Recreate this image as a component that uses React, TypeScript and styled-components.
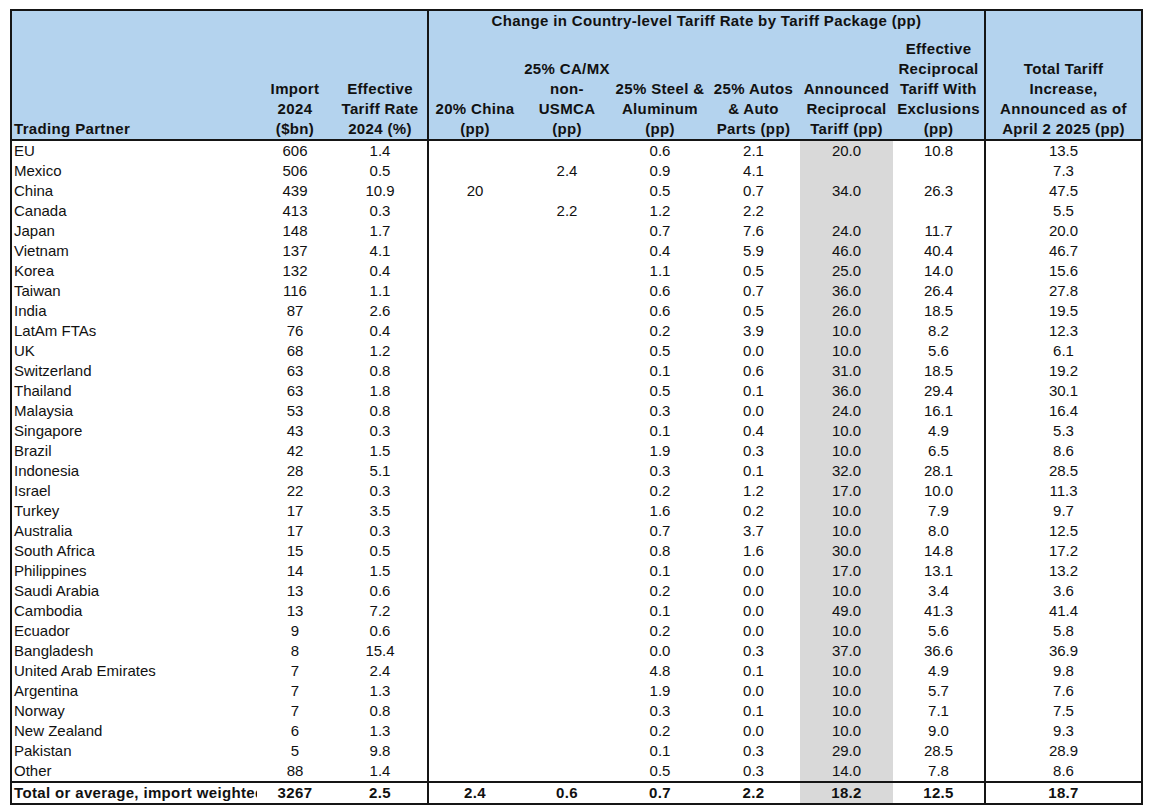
import React from "react";
import styled, { createGlobalStyle, css } from "styled-components";

const GlobalStyle = createGlobalStyle`
  html, body {
    margin: 0;
    padding: 0;
    background: #ffffff;
  }
`;

const Page = styled.div`
  padding: 9px 0 0 10px;
  background: #ffffff;
  min-height: 812px;
  box-sizing: border-box;
`;

const LINE = "#151515";
const HEAD_BG = "#B4D3EE";
const SHADE = "#D9D9D9";

const Table = styled.table`
  border-collapse: separate;
  border-spacing: 0;
  table-layout: fixed;
  width: 1133px;
  border: 2px solid ${LINE};
  font-family: "Liberation Sans", Arial, sans-serif;
  font-size: 15px;
  line-height: 20px;
  color: #111111;
`;

const HeadRow = styled.tr<{ $h: number }>`
  height: ${(p) => p.$h}px;
`;

const HeadCell = styled.th<{
  $left?: boolean;
  $divider?: boolean;
  $base?: boolean;
  $middle?: boolean;
}>`
  background: ${HEAD_BG};
  font-weight: bold;
  letter-spacing: 0.35px;
  padding: 0;
  text-align: ${(p) => (p.$left ? "left" : "center")};
  padding-left: ${(p) => (p.$left ? "2px" : "0")};
  vertical-align: ${(p) => (p.$middle ? "middle" : "bottom")};
  white-space: nowrap;
  ${(p) =>
    p.$divider &&
    css`
      border-right: 2px solid ${LINE};
    `}
  ${(p) =>
    p.$base &&
    css`
      border-bottom: 2px solid ${LINE};
    `}
`;

const BodyRow = styled.tr`
  height: 20px;
`;

const Cell = styled.td<{
  $left?: boolean;
  $divider?: boolean;
  $shade?: boolean;
  $total?: boolean;
}>`
  padding: 0;
  height: 20px;
  text-align: ${(p) => (p.$left ? "left" : "center")};
  padding-left: ${(p) => (p.$left ? "2px" : "0")};
  vertical-align: middle;
  white-space: nowrap;
  overflow: hidden;
  text-overflow: clip;
  background: ${(p) => (p.$shade ? SHADE : "#ffffff")};
  ${(p) =>
    p.$divider &&
    css`
      border-right: 2px solid ${LINE};
    `}
  ${(p) =>
    p.$total &&
    css`
      border-top: 2px solid ${LINE};
      font-weight: bold;
      letter-spacing: 0.35px;
      height: 18px;
    `}
`;

type Row = [string, string, string, string, string, string, string, string, string, string];

const rows: Row[] = [
  ["EU", "606", "1.4", "", "", "0.6", "2.1", "20.0", "10.8", "13.5"],
  ["Mexico", "506", "0.5", "", "2.4", "0.9", "4.1", "", "", "7.3"],
  ["China", "439", "10.9", "20", "", "0.5", "0.7", "34.0", "26.3", "47.5"],
  ["Canada", "413", "0.3", "", "2.2", "1.2", "2.2", "", "", "5.5"],
  ["Japan", "148", "1.7", "", "", "0.7", "7.6", "24.0", "11.7", "20.0"],
  ["Vietnam", "137", "4.1", "", "", "0.4", "5.9", "46.0", "40.4", "46.7"],
  ["Korea", "132", "0.4", "", "", "1.1", "0.5", "25.0", "14.0", "15.6"],
  ["Taiwan", "116", "1.1", "", "", "0.6", "0.7", "36.0", "26.4", "27.8"],
  ["India", "87", "2.6", "", "", "0.6", "0.5", "26.0", "18.5", "19.5"],
  ["LatAm FTAs", "76", "0.4", "", "", "0.2", "3.9", "10.0", "8.2", "12.3"],
  ["UK", "68", "1.2", "", "", "0.5", "0.0", "10.0", "5.6", "6.1"],
  ["Switzerland", "63", "0.8", "", "", "0.1", "0.6", "31.0", "18.5", "19.2"],
  ["Thailand", "63", "1.8", "", "", "0.5", "0.1", "36.0", "29.4", "30.1"],
  ["Malaysia", "53", "0.8", "", "", "0.3", "0.0", "24.0", "16.1", "16.4"],
  ["Singapore", "43", "0.3", "", "", "0.1", "0.4", "10.0", "4.9", "5.3"],
  ["Brazil", "42", "1.5", "", "", "1.9", "0.3", "10.0", "6.5", "8.6"],
  ["Indonesia", "28", "5.1", "", "", "0.3", "0.1", "32.0", "28.1", "28.5"],
  ["Israel", "22", "0.3", "", "", "0.2", "1.2", "17.0", "10.0", "11.3"],
  ["Turkey", "17", "3.5", "", "", "1.6", "0.2", "10.0", "7.9", "9.7"],
  ["Australia", "17", "0.3", "", "", "0.7", "3.7", "10.0", "8.0", "12.5"],
  ["South Africa", "15", "0.5", "", "", "0.8", "1.6", "30.0", "14.8", "17.2"],
  ["Philippines", "14", "1.5", "", "", "0.1", "0.0", "17.0", "13.1", "13.2"],
  ["Saudi Arabia", "13", "0.6", "", "", "0.2", "0.0", "10.0", "3.4", "3.6"],
  ["Cambodia", "13", "7.2", "", "", "0.1", "0.0", "49.0", "41.3", "41.4"],
  ["Ecuador", "9", "0.6", "", "", "0.2", "0.0", "10.0", "5.6", "5.8"],
  ["Bangladesh", "8", "15.4", "", "", "0.0", "0.3", "37.0", "36.6", "36.9"],
  ["United Arab Emirates", "7", "2.4", "", "", "4.8", "0.1", "10.0", "4.9", "9.8"],
  ["Argentina", "7", "1.3", "", "", "1.9", "0.0", "10.0", "5.7", "7.6"],
  ["Norway", "7", "0.8", "", "", "0.3", "0.1", "10.0", "7.1", "7.5"],
  ["New Zealand", "6", "1.3", "", "", "0.2", "0.0", "10.0", "9.0", "9.3"],
  ["Pakistan", "5", "9.8", "", "", "0.1", "0.3", "29.0", "28.5", "28.9"],
  ["Other", "88", "1.4", "", "", "0.5", "0.3", "14.0", "7.8", "8.6"],
];

const total: Row = [
  "Total or average, import weighted",
  "3267",
  "2.5",
  "2.4",
  "0.6",
  "0.7",
  "2.2",
  "18.2",
  "12.5",
  "18.7",
];

const widths = [245, 76, 96, 92, 92, 94, 93, 93, 93, 155];

const Lines: React.FC<{ lines: string[] }> = ({ lines }) => (
  <>
    {lines.map((l, i) => (
      <React.Fragment key={i}>
        {i > 0 && <br />}
        {l}
      </React.Fragment>
    ))}
  </>
);

const DataRow: React.FC<{ row: Row; total?: boolean }> = ({ row, total }) => (
  <BodyRow>
    {row.map((v, i) => (
      <Cell
        key={i}
        $left={i === 0}
        $divider={i === 2 || i === 8}
        $shade={i === 7}
        $total={total}
      >
        {v}
      </Cell>
    ))}
  </BodyRow>
);

export default function App() {
  return (
    <>
      <GlobalStyle />
      <Page>
        <Table>
          <colgroup>
            {widths.map((w, i) => (
              <col key={i} style={{ width: w }} />
            ))}
          </colgroup>
          <thead>
            <HeadRow $h={20}>
              <HeadCell rowSpan={2} $left $base>
                Trading Partner
              </HeadCell>
              <HeadCell rowSpan={2} $base>
                <Lines lines={["Import", "2024", "($bn)"]} />
              </HeadCell>
              <HeadCell rowSpan={2} $base $divider>
                <Lines lines={["Effective", "Tariff Rate", "2024 (%)"]} />
              </HeadCell>
              <HeadCell colSpan={6} $divider $middle>
                Change in Country-level Tariff Rate by Tariff Package (pp)
              </HeadCell>
              <HeadCell rowSpan={2} $base>
                <Lines
                  lines={[
                    "Total Tariff",
                    "Increase,",
                    "Announced as of",
                    "April 2 2025 (pp)",
                  ]}
                />
              </HeadCell>
            </HeadRow>
            <HeadRow $h={110}>
              <HeadCell $base>
                <Lines lines={["20% China", "(pp)"]} />
              </HeadCell>
              <HeadCell $base>
                <Lines lines={["25% CA/MX", "non-", "USMCA", "(pp)"]} />
              </HeadCell>
              <HeadCell $base>
                <Lines lines={["25% Steel &", "Aluminum", "(pp)"]} />
              </HeadCell>
              <HeadCell $base>
                <Lines lines={["25% Autos", "& Auto", "Parts (pp)"]} />
              </HeadCell>
              <HeadCell $base>
                <Lines lines={["Announced", "Reciprocal", "Tariff (pp)"]} />
              </HeadCell>
              <HeadCell $base $divider>
                <Lines
                  lines={["Effective", "Reciprocal", "Tariff With", "Exclusions", "(pp)"]}
                />
              </HeadCell>
            </HeadRow>
          </thead>
          <tbody>
            {rows.map((r) => (
              <DataRow key={r[0]} row={r} />
            ))}
            <DataRow row={total} total />
          </tbody>
        </Table>
      </Page>
    </>
  );
}
